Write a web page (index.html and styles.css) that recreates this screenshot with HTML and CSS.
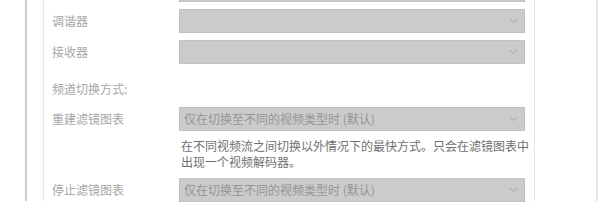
FILE: index.html
```html
<!DOCTYPE html>
<html>
<head>
<meta charset="utf-8">
<link rel="stylesheet" href="styles.css">
</head>
<body>
<div class="frame">
  <div class="panel">
    <div class="row first">
      <span class="label"></span>
      <div class="select"><span class="chev"><svg width="9" height="6" viewBox="0 0 9 6"><path d="M1 1 L4.5 4.5 L8 1" fill="none" stroke="#b4b4b4" stroke-width="1.2"/></svg></span></div>
    </div>
    <div class="row">
      <span class="label">调谐器</span>
      <div class="select"><span class="chev"><svg width="9" height="6" viewBox="0 0 9 6"><path d="M1 1 L4.5 4.5 L8 1" fill="none" stroke="#b4b4b4" stroke-width="1.2"/></svg></span></div>
    </div>
    <div class="row">
      <span class="label">接收器</span>
      <div class="select"><span class="chev"><svg width="9" height="6" viewBox="0 0 9 6"><path d="M1 1 L4.5 4.5 L8 1" fill="none" stroke="#b4b4b4" stroke-width="1.2"/></svg></span></div>
    </div>
    <div class="heading">频道切换方式:</div>
    <div class="row r4">
      <span class="label">重建滤镜图表</span>
      <div class="select"><span class="value">仅在切换至不同的视频类型时 (默认)</span><span class="chev"><svg width="9" height="6" viewBox="0 0 9 6"><path d="M1 1 L4.5 4.5 L8 1" fill="none" stroke="#b4b4b4" stroke-width="1.2"/></svg></span></div>
    </div>
    <div class="desc">在不同视频流之间切换以外情况下的最快方式。只会在滤镜图表中<br>出现一个视频解码器。</div>
    <div class="row r5">
      <span class="label">停止滤镜图表</span>
      <div class="select"><span class="value">仅在切换至不同的视频类型时 (默认)</span><span class="chev"><svg width="9" height="6" viewBox="0 0 9 6"><path d="M1 1 L4.5 4.5 L8 1" fill="none" stroke="#b4b4b4" stroke-width="1.2"/></svg></span></div>
    </div>
  </div>
</div>
</body>
</html>
```
FILE: styles.css
```css
html, body {
  margin: 0;
  padding: 0;
  background: #ffffff;
}
body {
  width: 600px;
  height: 223px;
  overflow: hidden;
  font-family: "Noto Sans CJK SC", "Noto Sans", sans-serif;
  font-size: 12px;
}
.frame {
  margin-left: 25px;
  width: 573px;
  height: 223px;
  box-sizing: border-box;
  border-left: 2px solid #cdcdcd;
  border-right: 2px solid #e3e3e3;
  padding-left: 16px;
}
.panel {
  width: 492px;
  height: 223px;
  box-sizing: border-box;
  border-left: 1px solid #e6e6e6;
  border-right: 1px solid #e6e6e6;
  padding: 0 9px 0 8px;
}
.row {
  display: grid;
  grid-template-columns: 127px 1fr;
  align-items: center;
  height: 24px;
  margin-top: 7px;
}
.row.first {
  margin-top: -22px;
}
.label {
  color: #a6a6a6;
  line-height: 16px;
}
.select {
  height: 24px;
  box-sizing: border-box;
  background: #cbcbcb;
  border: 1px solid #c2c2c2;
  display: flex;
  align-items: center;
  padding: 0 6px 0 4px;
}
.value {
  flex: 1;
  color: #959595;
  line-height: 16px;
}
.chev {
  margin-left: auto;
  display: flex;
}
.heading {
  margin-top: 17px;
  line-height: 16px;
  color: #a6a6a6;
}
.row.r4 {
  margin-top: 10px;
}
.desc {
  margin-top: 7px;
  margin-left: 129px;
  line-height: 16px;
  color: #707070;
  white-space: nowrap;
}
.row.r5 {
  margin-top: 8px;
}
```
